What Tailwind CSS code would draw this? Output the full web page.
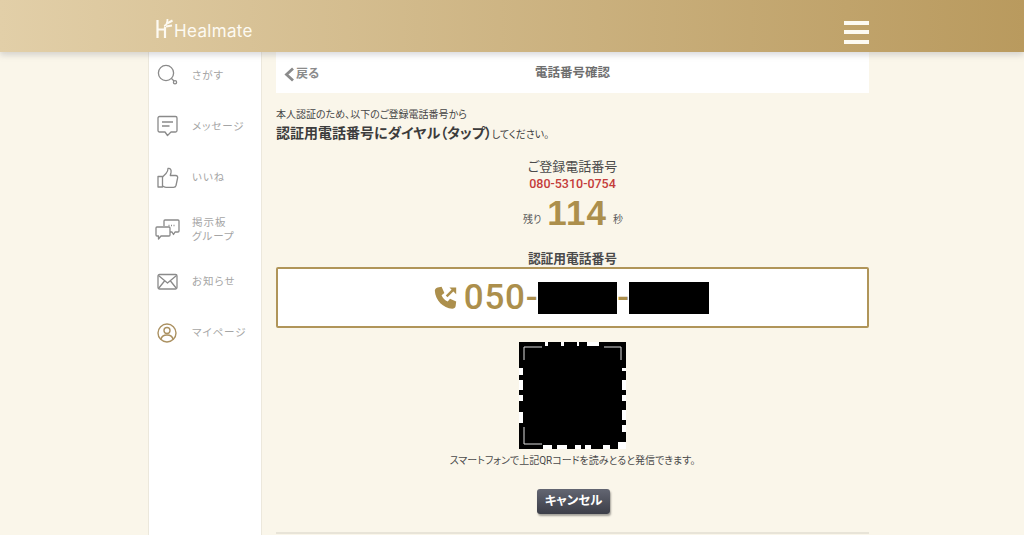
<!DOCTYPE html>
<html lang="ja">
<head>
<meta charset="utf-8">
<title>Healmate</title>
<script src="https://cdn.jsdelivr.net/npm/@tailwindcss/browser@4"></script>
</head>
<body class="bg-[#faf6ea] font-['Roboto','Noto_Sans_CJK_JP',sans-serif] [font-feature-settings:'palt'] overflow-hidden">
<div class="h-[535px] overflow-hidden flex flex-col">

  <!-- Header -->
  <header class="relative z-10 h-[52px] shrink-0 bg-gradient-to-r from-[#e2cfa8] to-[#b99a5e] shadow-[0_3px_6px_rgba(120,120,130,0.28)]">
    <div class="ml-[155px] w-[714px] h-full flex items-center justify-between">
      <div class="flex items-end mt-[6px]">
        <svg width="19" height="21" viewBox="0 0 19 21" fill="none" stroke="#fdfaf2" stroke-width="2.200" class="mb-[2px]">
          <path d="M2.500 2V20M10 9V20M2.500 11.500H10"/>
          <path d="M9 8C11.500 7.500 12.500 5 12.500 1" stroke-width="1.800"/>
          <path d="M12 5.500L17.500 2.500M11 8.500L17 7.500" stroke-width="2"/>
        </svg>
        <span class="font-['Inter',sans-serif] text-[17px] leading-[20px] tracking-[0.02em] font-normal text-[#fdfaf2]">Healmate</span>
      </div>
      <div class="flex flex-col gap-[5.500px] w-[25px] mt-[12px]">
        <div class="h-[4px] bg-[#fdfaf2]"></div>
        <div class="h-[4px] bg-[#fdfaf2]"></div>
        <div class="h-[4px] bg-[#fdfaf2]"></div>
      </div>
    </div>
  </header>

  <div class="flex flex-1 ml-[148px]">
    <!-- Sidebar -->
    <nav class="w-[114px] shrink-0 bg-white border-x border-[#ece8dc] text-[10.500px] leading-[14px] text-[#a5a5a5] tracking-[0.09em]">
      <a class="flex items-center h-[26px] mt-[11px] pl-[8px]">
        <svg width="22" height="22" viewBox="0 0 22 22" fill="none" stroke="#8a8a8a" stroke-width="1.300" class="-mt-[2px]">
          <circle cx="9" cy="9" r="7.600"/>
          <path d="M14.500 14.500L17 17"/>
          <circle cx="18" cy="18.200" r="1.600"/>
        </svg>
        <span class="ml-[13px]">さがす</span>
      </a>
      <a class="flex items-center h-[26px] mt-[25px] pl-[8px]">
        <svg width="22" height="22" viewBox="0 0 22 22" fill="none" stroke="#8a8a8a" stroke-width="1.300" stroke-linejoin="round" class="-mt-[2px]">
          <path d="M2.500 1.500H18.500A1.500 1.500 0 0 1 20 3V15.500A1.500 1.500 0 0 1 18.500 17H14L10.500 20.500L8 17H2.500A1.500 1.500 0 0 1 1 15.500V3A1.500 1.500 0 0 1 2.500 1.500Z"/>
          <path d="M5 7H16M5 11H12.500"/>
        </svg>
        <span class="ml-[13px]">メッセージ</span>
      </a>
      <a class="flex items-center h-[26px] mt-[25px] pl-[8px]">
        <svg width="22" height="22" viewBox="0 0 22 22" fill="none" stroke="#8a8a8a" stroke-width="1.300" stroke-linejoin="round">
          <path d="M1 9.500H5.500V20H1Z"/>
          <path d="M5.500 10L9 6.500C10.500 5 11 3.500 11 1.500C13.500 1 14.500 3 14 5.500L13.300 8.500H18.500C20.500 8.500 21 10 20.500 11.500L19 18.500C18.700 19.700 17.800 20.300 16.500 20.300H9C7.500 20.300 6.500 19.800 5.500 19"/>
        </svg>
        <span class="ml-[13px]">いいね</span>
      </a>
      <a class="flex items-center h-[28px] mt-[25px] pl-[6px]">
        <svg width="25" height="22" viewBox="0 0 25 22" fill="none" stroke="#8a8a8a" stroke-width="1.300" stroke-linejoin="round">
          <path d="M9 7V2A1 1 0 0 1 10 1H23A1 1 0 0 1 24 2V12A1 1 0 0 1 23 13H20L18.500 15.500L17 13H15"/>
          <path d="M2 8H14A1 1 0 0 1 15 9V16A1 1 0 0 1 14 17H6L3.500 20V17H2A1 1 0 0 1 1 16V9A1 1 0 0 1 2 8Z"/>
          <path d="M13.500 6.500H14.500M16 6.500H17M18.500 6.500H19.500"/>
        </svg>
        <span class="ml-[12px] leading-[14px]">掲示板<br>グループ</span>
      </a>
      <a class="flex items-center h-[26px] mt-[25px] pl-[8px]">
        <svg width="22" height="18" viewBox="0 0 22 18" fill="none" stroke="#8a8a8a" stroke-width="1.300" stroke-linejoin="round">
          <rect x="1" y="1.500" width="19" height="14.500" rx="1.500"/>
          <path d="M1.500 2.500L10.500 10L19.500 2.500M1.500 15.500L7.500 8M19.500 15.500L13.500 8"/>
        </svg>
        <span class="ml-[13px]">お知らせ</span>
      </a>
      <a class="flex items-center h-[26px] mt-[25px] pl-[8px]">
        <svg width="22" height="22" viewBox="0 0 22 22" fill="none" stroke="#ab9161" stroke-width="1.400">
          <circle cx="10" cy="11" r="9"/>
          <circle cx="10" cy="8.500" r="3"/>
          <path d="M4 17.500C4.500 14 7 13 10 13S15.500 14 16 17.500"/>
        </svg>
        <span class="ml-[13px]">マイページ</span>
      </a>
    </nav>

    <!-- Main -->
    <main class="ml-[14px] w-[593px] shrink-0 text-[#3f3f3f]">
      <div class="relative h-[41px] bg-white flex items-center justify-center">
        <a class="absolute left-[7px] top-[14px] flex items-center text-[12px] leading-[16px] font-bold text-[#8b8b8b]">
          <svg width="13" height="15" viewBox="0 0 12 15" fill="none" stroke="#8b8b8b" stroke-width="2.800"><path d="M9.500 1.500L3 7.500L9.500 13.500"/></svg>
          戻る
        </a>
        <h1 class="mt-[2px] text-[12.500px] font-bold text-[#6e6e6e]">電話番号確認</h1>
      </div>

      <p class="mt-[15px] text-[10px] leading-[14px] text-[#444]">本人認証のため、以下のご登録電話番号から</p>
      <p class="mt-[2px] leading-[18px] text-[#3c3c3c]"><span class="text-[14px] font-bold">認証用電話番号にダイヤル（タップ）</span><span class="text-[10px]">してください。</span></p>

      <div class="mt-[15px] flex flex-col items-center">
        <p class="text-[13px] leading-[16px] text-[#4a4a4a]">ご登録電話番号</p>
        <p class="mt-[1px] text-[12.500px] leading-[15px] font-medium text-[#c43c3a]">080-5310-0754</p>
        <p class="mt-[4px] flex items-end h-[36px] text-[#595959] text-[10px] ml-[1px]">
          <span class="mb-[4px]">残り</span>
          <span class="mx-[6px] font-['Liberation_Sans',sans-serif] text-[35px] leading-[36px] font-bold tracking-[0.03em] text-[#ac8f4c]">114</span>
          <span class="mb-[4px]">秒</span>
        </p>
        <p class="mt-[20px] text-[12.750px] leading-[16px] font-bold text-[#4a4a4a]">認証用電話番号</p>
      </div>

      <div class="h-[61px] pr-[4px] bg-white border-2 border-[#b09559] rounded-[2px] flex items-center justify-center">
        <svg width="27" height="27" viewBox="0 0 24 24" class="mr-[5px]" fill="#ac8f4c">
          <path d="M5 3L8.500 2.500L11 8L8.500 10C9.500 12.500 11.500 14.500 14 15.500L16 13L21.500 15.500L21 19.500C20.800 21 19.500 22 18 22C10 21.500 3 14.500 2.500 6C2.500 4.500 3.500 3.300 5 3Z"/>
          <path d="M13 11L19 5" stroke="#ac8f4c" stroke-width="2.200"/>
          <path d="M15.500 3H21.500V9Z"/>
        </svg>
        <span class="text-[35px] leading-[36px] font-medium tracking-[0.02em] text-[#ac8f4c]">050-</span>
        <span class="w-[79px] h-[32px] bg-black"></span>
        <span class="text-[35px] leading-[36px] font-medium text-[#ac8f4c]">-</span>
        <span class="w-[80px] h-[32px] bg-black"></span>
      </div>

      <div class="mt-[14px] flex justify-center">
        <svg width="107" height="107" viewBox="0 0 107 107" class="block">
          <rect width="107" height="107" fill="#000"/>
          <path d="M5 18V5H23M85 5H102V18M5 85V102H23" fill="none" stroke="#ddd" stroke-width="1"/>
          <path d="M26 0H29V4H26ZM42 0H45V4H42ZM58 0H60V4H58ZM68 0H80V4H68ZM0 26H4V33H0ZM103 26H107V29H103ZM0 38H4V48H0ZM103 38H107V48H103ZM0 53H4V59H0ZM103 53H107V59H103ZM0 70H4V81H0ZM103 68H107V78H103ZM103 83H107V90H103ZM24 103H33V107H24ZM38 103H48V107H38ZM56 103H62V107H56ZM66 103H72V107H66ZM84 103H91V107H84ZM99 100H107V107H99Z" fill="#fff"/>
        </svg>
      </div>

      <p class="mt-[5px] text-center text-[10px] leading-[14px] text-[#4a4a4a]">スマートフォンで上記QRコードを読みとると発信できます。</p>

      <div class="mt-[21px] flex justify-center">
        <button class="ml-[2px] w-[73px] h-[25px] rounded-[3px] bg-gradient-to-b from-[#636672] to-[#3c3e48] text-white text-[12.500px] font-bold shadow-[1px_2px_2px_rgba(0,0,0,0.35)]">キャンセル</button>
      </div>

      <div class="mt-[18px] h-[2px] bg-[#e8e4d8]"></div>
    </main>
  </div>
</div>
</body>
</html>
